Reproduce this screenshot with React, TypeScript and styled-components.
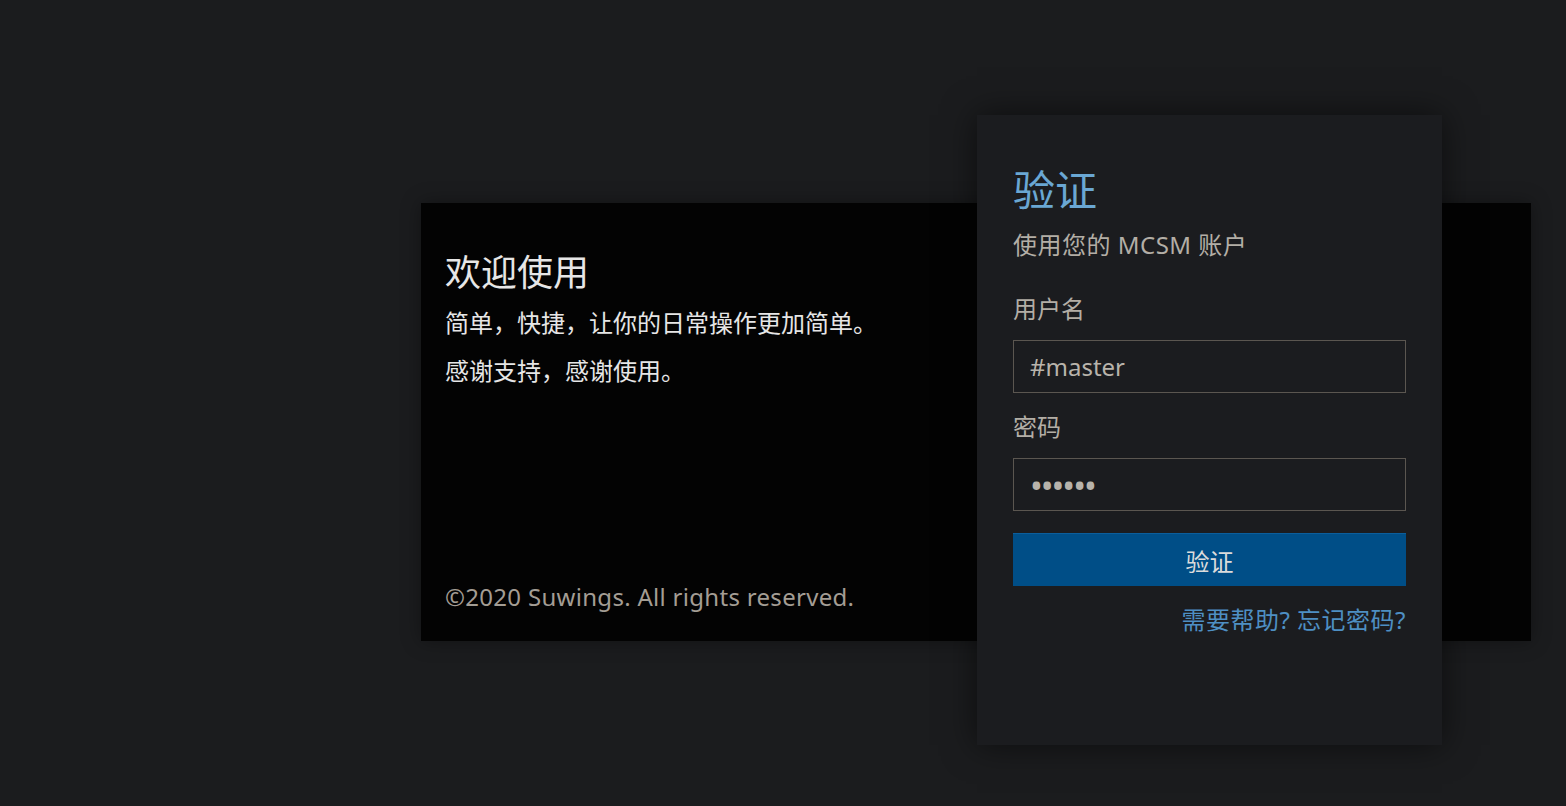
import styled, { createGlobalStyle } from "styled-components";

const GlobalStyle = createGlobalStyle`
  html, body {
    margin: 0;
    padding: 0;
    background-color: #1b1c1e;
    font-family: "Noto Sans", "Noto Sans CJK SC", sans-serif;
  }
  * {
    box-sizing: border-box;
  }
`;

const Page = styled.div`
  min-height: 806px;
  padding: 115px 0 0 421px;
`;

const Stage = styled.div`
  display: grid;
  grid-template-columns: 556px 465px 89px;
  grid-template-rows: 88px 438px 104px;
`;

const Welcome = styled.section`
  grid-column: 1 / 4;
  grid-row: 2;
  display: flex;
  flex-direction: column;
  padding: 48px 24px 28px;
  background-color: #030303;
  box-shadow: 0 0 18px rgba(0, 0, 0, 0.35);
  color: #e6e6e6;
`;

const WelcomeTitle = styled.h1`
  margin: 0;
  font-size: 36px;
  font-weight: 400;
  line-height: 43px;
`;

const WelcomeText = styled.p<{ $gap: number }>`
  margin: ${(props) => props.$gap}px 0 0;
  font-size: 24px;
  line-height: 32px;
`;

const Copyright = styled.footer`
  margin-top: auto;
  font-size: 24px;
  line-height: 32px;
  letter-spacing: 0.3px;
  color: #a39d94;
`;

const Card = styled.form`
  grid-column: 2;
  grid-row: 1 / 4;
  position: relative;
  z-index: 1;
  display: flex;
  flex-direction: column;
  padding: 50px 36px 36px;
  background-color: #1b1c1f;
  box-shadow: 0 0 32px rgba(0, 0, 0, 0.55);
`;

const CardTitle = styled.h2`
  margin: 0;
  font-size: 42px;
  font-weight: 400;
  line-height: 50px;
  color: #6aa7d3;
`;

const Subtitle = styled.div`
  margin-top: 14px;
  font-size: 24px;
  line-height: 32px;
  letter-spacing: 0.5px;
  color: #b3aea6;
`;

const Label = styled.label<{ $gap: number }>`
  margin-top: ${(props) => props.$gap}px;
  font-size: 24px;
  line-height: 32px;
  color: #b3aea6;
`;

const Field = styled.input<{ $secret?: boolean }>`
  margin-top: 15px;
  height: 53px;
  padding: 0 16px;
  border: 1px solid #5b5650;
  background-color: #1b1c1f;
  color: #b8b3ab;
  font-family: inherit;
  font-size: ${(props) => (props.$secret ? "34px" : "24px")};
  letter-spacing: ${(props) => (props.$secret ? "-2px" : "0")};
  outline: none;
`;

const Submit = styled.button`
  margin-top: 22px;
  height: 53px;
  border: none;
  border-top: 1px solid #0b5e9c;
  background-color: #004e87;
  color: #dcdcdc;
  font-family: inherit;
  font-size: 24px;
  cursor: pointer;
`;

const HelpLink = styled.a`
  margin-top: 18px;
  align-self: flex-end;
  font-size: 24px;
  line-height: 32px;
  letter-spacing: 0.5px;
  color: #4e8fc3;
  text-decoration: none;
`;

export default function App() {
  return (
    <>
      <GlobalStyle />
      <Page>
        <Stage>
          <Welcome>
            <WelcomeTitle>欢迎使用</WelcomeTitle>
            <WelcomeText $gap={13}>简单，快捷，让你的日常操作更加简单。</WelcomeText>
            <WelcomeText $gap={16}>感谢支持，感谢使用。</WelcomeText>
            <Copyright>©2020 Suwings. All rights reserved.</Copyright>
          </Welcome>
          <Card onSubmit={(e) => e.preventDefault()}>
            <CardTitle>验证</CardTitle>
            <Subtitle>使用您的 MCSM 账户</Subtitle>
            <Label $gap={32}>用户名</Label>
            <Field type="text" defaultValue="#master" />
            <Label $gap={18}>密码</Label>
            <Field type="password" defaultValue="123456" $secret />
            <Submit type="submit">验证</Submit>
            <HelpLink href="#">需要帮助? 忘记密码?</HelpLink>
          </Card>
        </Stage>
      </Page>
    </>
  );
}
